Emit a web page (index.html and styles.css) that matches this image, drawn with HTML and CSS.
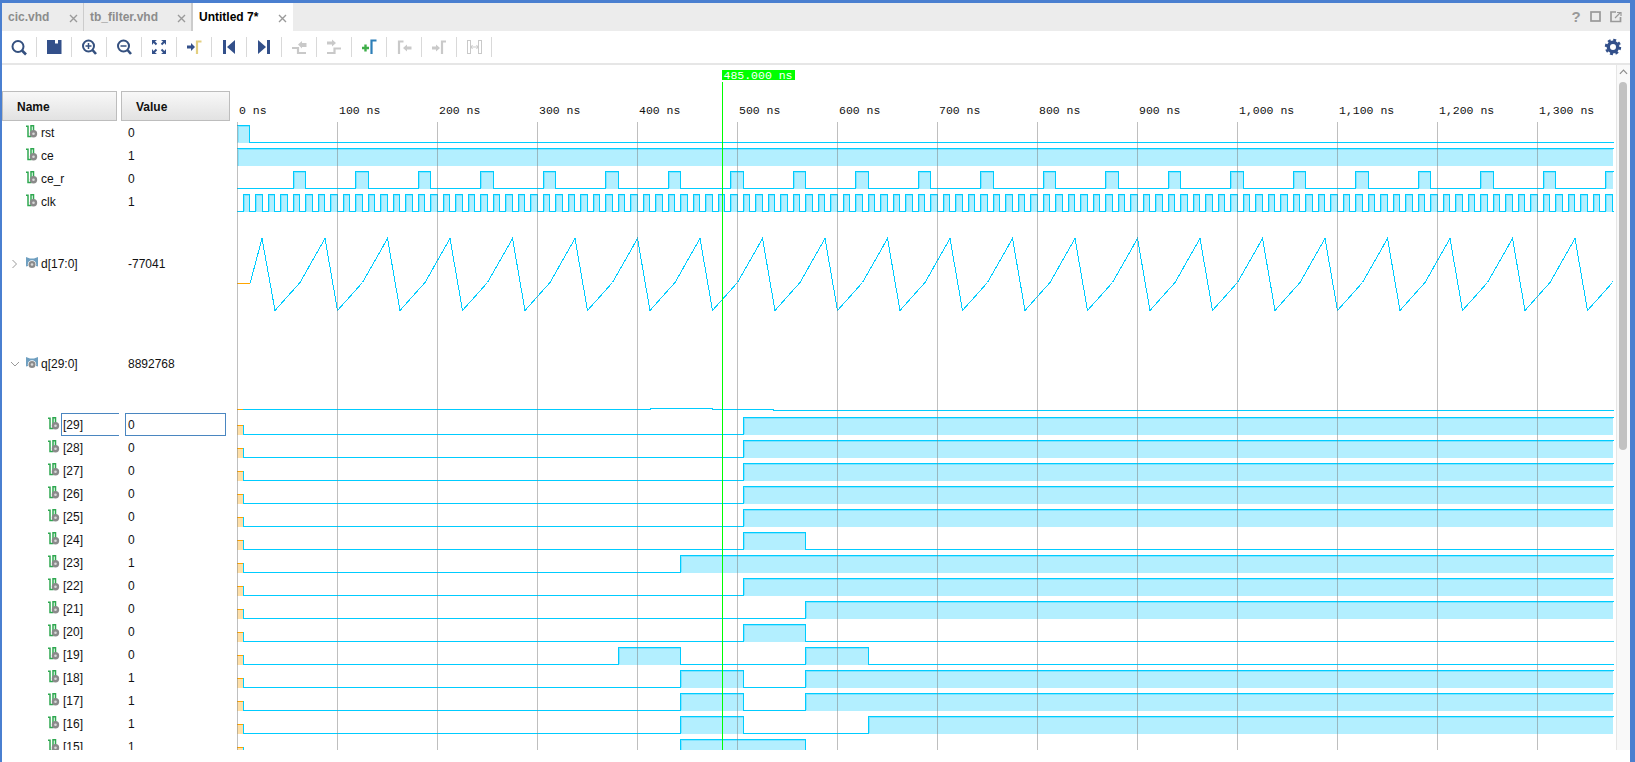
FILE: index.html
```html
<!DOCTYPE html>
<html lang="en">
<head>
<meta charset="utf-8">
<title>Untitled 7</title>
<link rel="stylesheet" href="styles.css">
</head>
<body>
<svg class="defs" width="0" height="0" aria-hidden="true">
  <symbol id="sig" viewBox="0 0 12 13">
    <path class="sig-g" d="M0 1.200H2V11.500H5.500M5 11V0.700H7.500V6"/>
    <circle class="sig-c" cx="7.500" cy="8.800" r="3.700"/>
    <circle class="sig-d" cx="7.500" cy="8.800" r="1.300"/>
  </symbol>
  <symbol id="bus" viewBox="0 0 12 13">
    <path class="bus-b" d="M0 0L4 1.500H8L12 0V9.500L8 8.500H4L0 9.500Z"/>
    <circle class="sig-w" cx="6" cy="7.500" r="4.200"/>
    <circle class="sig-c" cx="6" cy="7.500" r="3.500"/>
    <circle class="sig-d" cx="6" cy="7.500" r="1.300"/>
  </symbol>
  <symbol id="x" viewBox="0 0 9 9"><path class="x-s" d="M1 1L8 8M8 1L1 8"/></symbol>
</svg>
<div class="frame">
  <div class="tabbar">
    <div class="tab t1"><span>cic.vhd</span><svg class="close"><use href="#x"/></svg></div>
    <div class="tab t2"><span>tb_filter.vhd</span><svg class="close"><use href="#x"/></svg></div>
    <div class="tab t3"><span>Untitled 7*</span><svg class="close"><use href="#x"/></svg></div>
    <div class="winbtns">
      <span class="winbtn help">?</span>
      <span class="winbtn"><svg class="wi" viewBox="0 0 12 12"><rect class="wi-s" x="1" y="1" width="9" height="9"/></svg></span>
      <span class="winbtn"><svg class="wi" viewBox="0 0 12 12"><path class="wi-s" d="M6 1H1V10.500H10.500V6"/><path class="wi-t" d="M5 7L10 2M7 1.500H11V5"/></svg></span>
    </div>
  </div>

  <div class="toolbar">
    <button class="tb"><svg class="ti" viewBox="0 0 18 18"><circle class="b-s" cx="8" cy="8.500" r="5.500"/><path class="b-h" d="M12 12.500L16 16.500"/></svg></button><i class="sep"></i>
    <button class="tb"><svg class="ti" viewBox="0 0 18 18"><path class="b-f" d="M2 2H10V5.500H13V2H16.500V16H2Z"/></svg></button><i class="sep"></i>
    <button class="tb"><svg class="ti" viewBox="0 0 18 18"><circle class="b-s" cx="8.500" cy="8" r="5.500"/><path class="b-h" d="M12.500 12L16 16"/><path class="b-t" d="M5.500 8H11.500M8.500 5V11"/></svg></button><i class="sep"></i>
    <button class="tb"><svg class="ti" viewBox="0 0 18 18"><circle class="b-s" cx="8.500" cy="8" r="5.500"/><path class="b-h" d="M12.500 12L16 16"/><path class="b-t" d="M5.500 8H11.500"/></svg></button><i class="sep"></i>
    <button class="tb"><svg class="ti" viewBox="0 0 18 18"><path class="b-f" d="M2 2H7L5 3.600 7.200 5.800 5.800 7.200 3.600 5 2 7ZM16 2V7L14.400 5 12.200 7.200 10.800 5.800 13 3.600 11 2ZM2 16V11L3.600 13 5.800 10.800 7.200 12.200 5 14.400 7 16ZM16 16H11L13 14.400 10.800 12.200 12.200 10.800 14.400 13 16 11Z"/></svg></button><i class="sep"></i>
    <button class="tb"><svg class="ti" viewBox="0 0 18 18"><path class="b-f" d="M2 7.500H6V5L10 9 6 13V10.500H2Z"/><path class="y-s" d="M12 16V3.500H16.500"/></svg></button><i class="sep"></i>
    <button class="tb"><svg class="ti" viewBox="0 0 18 18"><path class="b-f" d="M3 2H6V16H3ZM15 2V16L7 9Z"/></svg></button><i class="sep"></i>
    <button class="tb"><svg class="ti" viewBox="0 0 18 18"><path class="b-f" d="M3 2L11 9 3 16ZM12 2H15V16H12Z"/></svg></button><i class="sep"></i>
    <button class="tb"><svg class="ti" viewBox="0 0 18 18"><path class="g-s" d="M2 10H8V15H16"/><path class="g-f" d="M8 6.500L12 3V5H16.500V9H12V10.500Z"/></svg></button><i class="sep"></i>
    <button class="tb"><svg class="ti" viewBox="0 0 18 18"><path class="g-s" d="M2 15H9.500V10.500H16"/><path class="g-f" d="M2 3.500H7V1.500L11 5 7 8.500V6.500H2Z"/></svg></button><i class="sep"></i>
    <button class="tb"><svg class="ti" viewBox="0 0 18 18"><path class="p-s" d="M2 10H9M5.500 6.500V13.500"/><path class="t-s" d="M11.500 16V2.500H16.500"/></svg></button><i class="sep"></i>
    <button class="tb"><svg class="ti" viewBox="0 0 18 18"><path class="g-s" d="M4 16V3.500H8.500"/><path class="g-f" d="M8 10L12 6.500V8.500H16.500V11.500H12V13.500Z"/></svg></button><i class="sep"></i>
    <button class="tb"><svg class="ti" viewBox="0 0 18 18"><path class="g-f" d="M2 8.500H6V6.500L10 10 6 13.500V11.500H2Z"/><path class="g-s" d="M12 16V3.500H16"/></svg></button><i class="sep"></i>
    <button class="tb"><svg class="ti" viewBox="0 0 18 18"><rect class="g-t" x="2.500" y="2.500" width="3" height="13"/><rect class="g-t" x="13.500" y="2.500" width="3" height="13"/><path class="g-t" d="M6 9H13M7.500 7L6 9 7.500 11M11.500 7L13 9 11.500 11"/></svg></button><i class="sep"></i>
    <button class="tb gear"><svg class="ti" viewBox="0 0 18 18"><circle class="gear-r" cx="9" cy="9" r="4.700"/><circle class="gear-t" cx="9" cy="9" r="7"/></svg></button>
  </div>

  <div class="view">
    <div class="names">
      <div class="heads">
        <div class="head h-name">Name</div>
        <div class="head h-val">Value</div>
      </div>
      <div class="rows">
        <div class="row"><div class="nm"><svg class="ic"><use href="#sig"/></svg>rst</div><div class="vl">0</div></div>
        <div class="row"><div class="nm"><svg class="ic"><use href="#sig"/></svg>ce</div><div class="vl">1</div></div>
        <div class="row"><div class="nm"><svg class="ic"><use href="#sig"/></svg>ce_r</div><div class="vl">0</div></div>
        <div class="row"><div class="nm"><svg class="ic"><use href="#sig"/></svg>clk</div><div class="vl">1</div></div>
        <div class="row row-d"><div class="nm nm-bus"><svg class="chev" viewBox="0 0 10 10"><path class="chev-s" d="M2.500 1L6.500 5 2.500 9"/></svg><svg class="ic"><use href="#bus"/></svg>d[17:0]</div><div class="vl">-77041</div></div>
        <div class="row row-q"><div class="nm nm-bus"><svg class="chev" viewBox="0 0 10 10"><path class="chev-s" d="M1 3L5 7 9 3"/></svg><svg class="ic"><use href="#bus"/></svg>q[29:0]</div><div class="vl">8892768</div></div>
        <div class="row selected"><div class="nm child"><svg class="ic"><use href="#sig"/></svg><span class="edit-n">[29]</span></div><div class="vl"><span class="edit-v">0</span></div></div>
        <div class="row"><div class="nm child"><svg class="ic"><use href="#sig"/></svg>[28]</div><div class="vl">0</div></div>
        <div class="row"><div class="nm child"><svg class="ic"><use href="#sig"/></svg>[27]</div><div class="vl">0</div></div>
        <div class="row"><div class="nm child"><svg class="ic"><use href="#sig"/></svg>[26]</div><div class="vl">0</div></div>
        <div class="row"><div class="nm child"><svg class="ic"><use href="#sig"/></svg>[25]</div><div class="vl">0</div></div>
        <div class="row"><div class="nm child"><svg class="ic"><use href="#sig"/></svg>[24]</div><div class="vl">0</div></div>
        <div class="row"><div class="nm child"><svg class="ic"><use href="#sig"/></svg>[23]</div><div class="vl">1</div></div>
        <div class="row"><div class="nm child"><svg class="ic"><use href="#sig"/></svg>[22]</div><div class="vl">0</div></div>
        <div class="row"><div class="nm child"><svg class="ic"><use href="#sig"/></svg>[21]</div><div class="vl">0</div></div>
        <div class="row"><div class="nm child"><svg class="ic"><use href="#sig"/></svg>[20]</div><div class="vl">0</div></div>
        <div class="row"><div class="nm child"><svg class="ic"><use href="#sig"/></svg>[19]</div><div class="vl">0</div></div>
        <div class="row"><div class="nm child"><svg class="ic"><use href="#sig"/></svg>[18]</div><div class="vl">1</div></div>
        <div class="row"><div class="nm child"><svg class="ic"><use href="#sig"/></svg>[17]</div><div class="vl">1</div></div>
        <div class="row"><div class="nm child"><svg class="ic"><use href="#sig"/></svg>[16]</div><div class="vl">1</div></div>
        <div class="row"><div class="nm child"><svg class="ic"><use href="#sig"/></svg>[15]</div><div class="vl">1</div></div>
      </div>
    </div>

    <svg class="wave" viewBox="237 65 1379 685" width="1379" height="685">
      <g id="waves"></g>
      <g class="ticks">
        <text x="239" y="114">0 ns</text>
        <text x="339" y="114">100 ns</text>
        <text x="439" y="114">200 ns</text>
        <text x="539" y="114">300 ns</text>
        <text x="639" y="114">400 ns</text>
        <text x="739" y="114">500 ns</text>
        <text x="839" y="114">600 ns</text>
        <text x="939" y="114">700 ns</text>
        <text x="1039" y="114">800 ns</text>
        <text x="1139" y="114">900 ns</text>
        <text x="1239" y="114">1,000 ns</text>
        <text x="1339" y="114">1,100 ns</text>
        <text x="1439" y="114">1,200 ns</text>
        <text x="1539" y="114">1,300 ns</text>
      </g>
      <rect class="cur-l" x="722" y="82" width="1" height="668"/>
      <rect class="cur-l" x="722" y="70" width="73" height="10"/>
      <text class="cur-t" x="723.500" y="79">485.000 ns</text>
    </svg>

    <div class="scroll">
      <svg class="sc-up" viewBox="0 0 10 6"><path class="sc-a" d="M1 5L5 1 9 5"/></svg>
      <div class="sc-thumb"></div>
    </div>
  </div>
</div>
<script src="waves.js"></script>
</body>
</html>
```
FILE: styles.css
```css
* { box-sizing: border-box; }
html, body { margin: 0; padding: 0; background: #fff; }
body { width: 1635px; height: 762px; overflow: hidden; font: 12px "Liberation Sans", Arial, sans-serif; color: #111; }
.defs { display: block; height: 0; }
.frame { width: 1635px; height: 762px; border-top: 3px solid #4a7fd0; border-left: 2px solid #4a7fd0; border-right: 5px solid #4a7fd0; display: flex; flex-direction: column; }

.tabbar { height: 28px; flex: none; background: #ececec; display: flex; }
.tab { display: flex; align-items: center; justify-content: space-between; font-weight: bold; color: #8c8c8c; padding: 0 5px 0 6px; border-right: 1px solid #ccc; }
.t1 { width: 82px; }
.t2 { width: 109px; border-right-width: 2px; }
.t3 { width: 100px; background: #fff; color: #000; border-right: 0; padding-right: 6px; }
.close { width: 9px; height: 9px; margin-top: 2px; }
.x-s { fill: none; stroke: #9a9a9a; stroke-width: 1.4; }
.winbtns { margin-left: auto; display: flex; padding-right: 4px; align-items: center; }
.winbtn { width: 20px; height: 20px; display: flex; align-items: center; justify-content: center; margin-top: -1px; }
.help { color: #999; font-size: 15px; font-weight: bold; }
.wi { width: 12px; height: 12px; }
.wi-s { fill: none; stroke: #999; stroke-width: 1.7; }
.wi-t { fill: none; stroke: #999; stroke-width: 1.2; }

.toolbar { height: 34px; flex: none; background: #fff; border-bottom: 2px solid #e6e6e6; display: flex; align-items: center; }
.tb { width: 34px; height: 32px; padding: 0; border: 0; background: none; display: flex; align-items: center; justify-content: center; flex: none; }
.ti { width: 18px; height: 18px; display: block; }
.sep { width: 1px; height: 20px; background: #d9d9d9; flex: none; }
.gear { margin-left: auto; }
.b-s { fill: none; stroke: #34507f; stroke-width: 2; }
.b-h { fill: none; stroke: #34507f; stroke-width: 2.6; }
.b-t { fill: none; stroke: #34507f; stroke-width: 1.5; }
.b-f { fill: #33508a; }
.y-s { fill: none; stroke: #e3cf80; stroke-width: 2.2; }
.g-s { fill: none; stroke: #c9c9c9; stroke-width: 2.2; }
.g-f { fill: #c9c9c9; }
.g-t { fill: none; stroke: #c9c9c9; stroke-width: 1; }
.p-s { fill: none; stroke: #3fae49; stroke-width: 2.4; }
.t-s { fill: none; stroke: #2d7fb8; stroke-width: 2.2; }
.gear-r { fill: none; stroke: #33508a; stroke-width: 3.4; }
.gear-t { fill: none; stroke: #33508a; stroke-width: 2.4; stroke-dasharray: 2.9 2.6; }

.view { height: 685px; flex: none; display: flex; overflow: hidden; }
.names { width: 235px; flex: none; padding-top: 26px; overflow: hidden; }
.heads { display: flex; gap: 4px; height: 30px; }
.head { border: 1px solid #bdbdbd; background: linear-gradient(#f8f8f8, #e2e2e2); font-weight: bold; color: #111; display: flex; align-items: center; padding-top: 2px; }
.h-name { width: 115px; padding-left: 14px; }
.h-val { width: 109px; padding-left: 14px; }

.row { display: flex; height: 23px; align-items: center; }
.row-d { height: 102px; }
.row-q { height: 98px; }
.nm { width: 119px; padding-left: 24px; display: flex; align-items: center; height: 100%; }
.nm-bus { padding-left: 8px; }
.child { padding-left: 46px; }
.vl { padding-left: 7px; }
.ic { width: 12px; height: 13px; margin-right: 3px; flex: none; margin-top: -2px; }
.chev { width: 10px; height: 10px; margin-right: 6px; flex: none; }
.chev-s { fill: none; stroke: #9a9a9a; stroke-width: 1; }
.sig-g { fill: none; stroke: #2fa850; stroke-width: 1.5; }
.sig-c { fill: #8a8a8a; }
.sig-d { fill: #d8d8d8; }
.sig-w { fill: #fff; }
.bus-b { fill: #6f9fc0; }
.selected { align-items: stretch; }
.selected .nm { padding-right: 2px; }
.selected .ic { align-self: center; margin-right: 1px; }
.edit-n { flex: 1; height: 100%; display: flex; align-items: center; padding-left: 1px; border: 1px solid #4a86c0; border-right: 0; }
.selected .vl { padding-left: 4px; width: 105px; display: flex; }
.edit-v { flex: 1; display: flex; align-items: center; padding-left: 2px; border: 1px solid #4a86c0; }

.wave { display: block; flex: none; background: #fff; }
.ticks text { font: 11.5px "Liberation Mono", "Courier New", monospace; fill: #111; }
.cur-l { fill: #00ff00; shape-rendering: crispEdges; }
.cur-t { font: 11.5px "Liberation Mono", "Courier New", monospace; fill: #fff; }
.grid { stroke: #808080; stroke-opacity: .5; stroke-width: 1; shape-rendering: crispEdges; }
.w-fill { fill: #b3efff; shape-rendering: crispEdges; }
.w-lite { fill: none; stroke: #7fe4ff; stroke-width: 1; shape-rendering: crispEdges; }
.w-line { fill: none; stroke: #00ccff; stroke-width: 1; shape-rendering: crispEdges; }
.w-ana { fill: none; stroke: #00ccff; stroke-width: 1; shape-rendering: crispEdges; }
.x-fill { fill: #ffe0a8; shape-rendering: crispEdges; }
.x-line { fill: none; stroke: #ffa500; stroke-width: 1; shape-rendering: crispEdges; }

.scroll { width: 14px; flex: none; background: #f9f9f9; border-left: 1px solid #e6e6e6; display: flex; flex-direction: column; align-items: center; padding-top: 4px; }
.sc-up { width: 9px; height: 6px; flex: none; margin-bottom: 7px; margin-right: 1px; }
.sc-a { fill: none; stroke: #8c8c8c; stroke-width: 1.3; }
.sc-thumb { width: 8px; height: 368px; background: #c2c2c2; border-radius: 4px; flex: none; margin-right: 1px; }
```
FILE: waves.js
```js
(function () {
  var NS = 'http://www.w3.org/2000/svg';
  var root = document.getElementById('waves');
  var X0 = 237, XE = 1613;

  function add(cls, d) {
    var p = document.createElementNS(NS, 'path');
    p.setAttribute('class', cls);
    p.setAttribute('d', d);
    root.appendChild(p);
  }

  // Single-bit wave: segments = [[riseX, fallX], ...], low = pixel row of the low level.
  function bit(low, high, segs, startX, startHigh) {
    var fill = '', lite = '', line = '';
    var yL = low + 0.5, yH = high + 0.5;
    line = 'M' + startX + ' ' + (startHigh ? yH : yL);
    segs.forEach(function (s) {
      var a = Math.floor(s[0]), b = Math.min(Math.floor(s[1]), XE);
      if (a >= XE) return;
      fill += 'M' + a + ' ' + high + 'H' + b + 'V' + (low + 1) + 'H' + a + 'Z';
      lite += 'M' + (a + 1.5) + ' ' + low + 'V' + (yH + 1) + 'H' + b;
      line += 'H' + (a + 0.5) + 'V' + yH + 'H' + (b + 0.5);
      if (b < XE) line += 'V' + yL;
    });
    line += 'H' + (XE + 1);
    add('w-fill', fill);
    add('w-lite', lite);
    add('w-line', line);
  }

  // rst
  bit(142, 125, [[237, 249]], 237, true);
  // ce
  add('w-fill', 'M237 148H' + XE + 'V166H237Z');
  add('w-lite', 'M238.5 166V149.5H' + XE);
  add('w-line', 'M237 148.5H' + (XE + 1));
  // ce_r
  var s = [], t;
  for (t = 293.25; t < XE; t += 62.5) s.push([t, t + 12.5]);
  bit(188, 171, s, 237, false);
  // clk
  s = [];
  for (t = 243.25; t < XE; t += 12.5) s.push([t, t + 6.25]);
  bit(211, 194, s, 237, false);

  // d[17:0] analog
  add('x-line', 'M237 283.5H250');
  var d = 'M250 283.5L262 238.5', k = 0, px;
  while (true) {
    px = 275 + 62.5 * k;
    if (px > XE) break;
    d += 'L' + px + ' 310.5';
    px = 300 + 62.5 * k;
    if (px > XE) { d += 'L' + XE + ' ' + (310.5 - 28 * (XE - (275 + 62.5 * k)) / 25); break; }
    d += 'L' + px + ' 282.5';
    px = 325 + 62.5 * k;
    if (px > XE) { d += 'L' + XE + ' ' + (282.5 - 44 * (XE - (300 + 62.5 * k)) / 25); break; }
    d += 'L' + px + ' 238.5';
    px = 337.5 + 62.5 * k;
    if (px > XE) { d += 'L' + XE + ' ' + (238.5 + 72 * (XE - (325 + 62.5 * k)) / 12.5); break; }
    k++;
  }
  add('w-ana', d);

  // q[29:0] analog
  add('x-line', 'M237 409.5H243');
  add('w-ana', 'M243 409.5H650V408.5H712V409.5H773V410.5H' + (XE + 1));

  // q bits, top row [29] to bottom row [15]
  var R1 = 680, R2 = 743, R3 = 805, R4 = 868, R5 = 618, E = 1700;
  var bits = [
    [[R2, E]], [[R2, E]], [[R2, E]], [[R2, E]], [[R2, E]],
    [[R2, R3]],
    [[R1, E]],
    [[R2, E]],
    [[R3, E]],
    [[R2, R3]],
    [[R5, R1], [R3, R4]],
    [[R1, R2], [R3, E]],
    [[R1, R2], [R3, E]],
    [[R1, R2], [R4, E]],
    [[R1, R3]]
  ];
  bits.forEach(function (segs, i) {
    var low = 434 + 23 * i, top = low - 9;
    add('x-fill', 'M237 ' + top + 'H243V' + (low + 1) + 'H237Z');
    add('x-line', 'M237 ' + (top + 0.5) + 'H243');
    add('w-line', 'M243.5 ' + top + 'V' + (low + 1));
    bit(low, low - 17, segs, 243, false);
  });

  // grid on top of the traces
  var g = '';
  for (var i = 0; i <= 13; i++) g += 'M' + (X0 + 100 * i + 0.5) + ' 122V750';
  add('grid', g);
})();
```
